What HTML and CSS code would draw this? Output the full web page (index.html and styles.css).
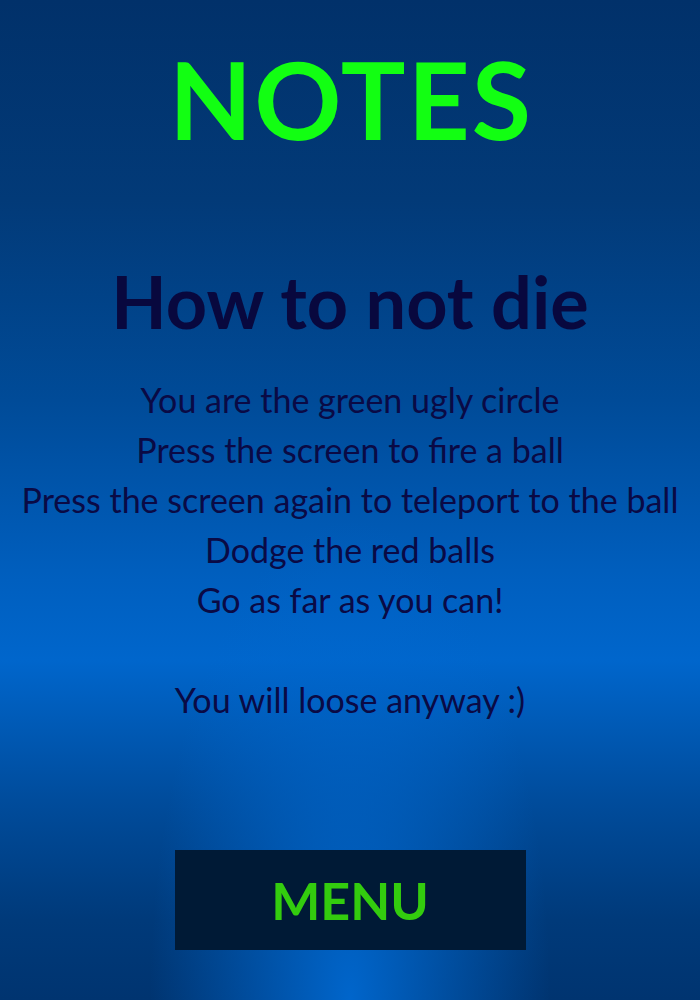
FILE: index.html
```html
<!DOCTYPE html>
<html lang="en">
<head>
<meta charset="utf-8">
<title>Notes</title>
<link rel="stylesheet" href="styles.css">
</head>
<body>
<main class="screen">
  <h1 class="title">NOTES</h1>
  <h2 class="subtitle">How to not die</h2>
  <div class="rules">
    <p class="rule">You are the green ugly circle</p>
    <p class="rule">Press the screen to fire a ball</p>
    <p class="rule">Press the screen again to teleport to the ball</p>
    <p class="rule">Dodge the red balls</p>
    <p class="rule">Go as far as you can!</p>
    <p class="rule rule-blank">&nbsp;</p>
    <p class="rule">You will loose anyway :)</p>
  </div>
  <button class="menu" type="button">MENU</button>
</main>
</body>
</html>
```

FILE: styles.css
```css
html, body {
  margin: 0;
  padding: 0;
}

body {
  width: 700px;
  height: 1000px;
  overflow: hidden;
  font-family: "Comic Sans MS", "Lato", "Liberation Sans", sans-serif;
  background:
    radial-gradient(ellipse 200px 480px at 50% 100%, rgba(0, 104, 208, 0.95) 0%, rgba(0, 104, 208, 0) 100%),
    linear-gradient(to bottom, #01316a 0%, #023a78 20%, #004b98 40%, #005fbf 58%, #0066cc 66%, #004c9c 80%, #003a7a 92%, #003470 100%);
}

.screen {
  display: flex;
  flex-direction: column;
  align-items: center;
  text-align: center;
  padding-top: 44px;
}

.title {
  margin: 0;
  font-size: 108px;
  line-height: 1;
  font-weight: 700;
  letter-spacing: 2px;
  text-indent: 2px;
  color: #12ff12;
}

.subtitle {
  margin: 113px 0 0;
  font-size: 72px;
  line-height: 1;
  font-weight: 700;
  color: #08083e;
}

.rules {
  margin-top: 38px;
  display: flex;
  flex-direction: column;
}

.rule {
  margin: 0;
  font-size: 34px;
  line-height: 50px;
  color: #0a0a45;
  white-space: nowrap;
}

.menu {
  margin-top: 125px;
  width: 351px;
  height: 100px;
  border: 0;
  padding: 0;
  background: #001a36;
  color: #33cc0e;
  font-family: inherit;
  font-size: 52px;
  line-height: 1;
  font-weight: 700;
}
```
